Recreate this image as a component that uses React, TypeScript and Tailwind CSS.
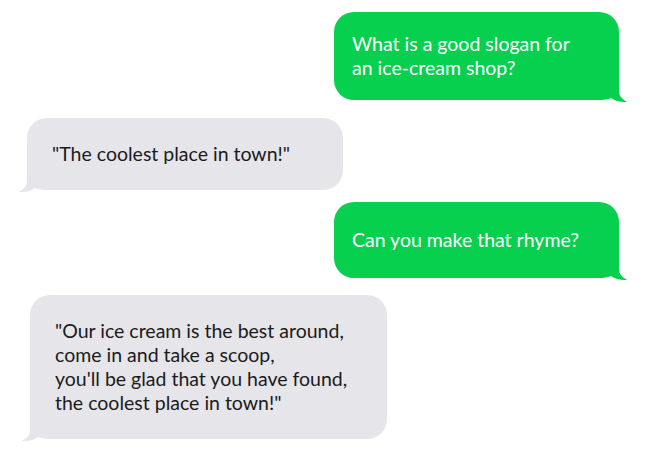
import React from 'react';

type Msg = { side: 'me' | 'them'; lines: string[]; cls: string };

const messages: Msg[] = [
  {
    side: 'me',
    lines: ['What is a good slogan for', 'an ice-cream shop?'],
    cls: 'mt-[12px] mr-[38px] w-[285px] py-[20px]',
  },
  {
    side: 'them',
    lines: ['"The coolest place in town!"'],
    cls: 'mt-[18px] ml-[27px] w-[316px] py-[24px]',
  },
  {
    side: 'me',
    lines: ['Can you make that rhyme?'],
    cls: 'mt-[12px] mr-[38px] w-[285px] py-[26px]',
  },
  {
    side: 'them',
    lines: [
      '"Our ice cream is the best around,',
      'come in and take a scoop,',
      "you'll be glad that you have found,",
      'the coolest place in town!"',
    ],
    cls: 'mt-[17px] ml-[30px] w-[357px] py-[24px]',
  },
];

function Tail({ side }: { side: 'me' | 'them' }) {
  const me = side === 'me';
  return (
    <svg
      width="32"
      height="26"
      viewBox="0 0 32 26"
      className={
        me
          ? 'absolute -right-[10px] -bottom-[3px] text-[#07d04e]'
          : 'absolute -left-[10px] -bottom-[3px] -scale-x-100 text-[#e5e5ea]'
      }
    >
      <path
        d="M0,0 H22 V14 C22,19 25,22 30,25 C24,25.5 18,24 14,21 C11,22.5 6,23 0,23 Z"
        fill="currentColor"
      />
    </svg>
  );
}

function Bubble({ m }: { m: Msg }) {
  const me = m.side === 'me';
  return (
    <div
      className={`relative rounded-[20px] ${m.cls} ${
        me ? 'self-end bg-[#07d04e] pl-[18px] text-white' : 'self-start bg-[#e5e5ea] pl-[25px] text-[#1b1b1b]'
      }`}
    >
      <Tail side={m.side} />
      <div className="relative text-[19.5px] leading-[24px]">
        {m.lines.map((l) => (
          <div key={l} className="whitespace-nowrap">
            {l}
          </div>
        ))}
      </div>
    </div>
  );
}

export default function App() {
  return (
    <div
      className="flex h-[465px] w-[657px] flex-col bg-white"
      style={{ fontFamily: 'Lato, "Open Sans", sans-serif' }}
    >
      {messages.map((m, i) => (
        <Bubble key={i} m={m} />
      ))}
    </div>
  );
}
